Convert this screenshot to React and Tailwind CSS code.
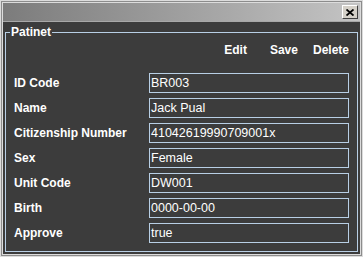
import React from "react";

const rows = [
  ["ID Code", "BR003"],
  ["Name", "Jack Pual"],
  ["Citizenship Number", "41042619990709001x"],
  ["Sex", "Female"],
  ["Unit Code", "DW001"],
  ["Birth", "0000-00-00"],
  ["Approve", "true"],
];

const App = () => {
  return (
    <div
      className="w-[363px] h-[257px] border border-[#dcdcdc] bg-[#dcdcdc]"
      style={{ fontFamily: '"Liberation Sans", Arial, sans-serif' }}
    >
      <div className="h-full border border-[#8c8c8c]">
        <div className="h-full flex flex-col border border-[#dcdcdc]">
          {/* title bar */}
          <div className="h-[18px] flex items-center justify-end pr-[2px] bg-gradient-to-r from-[#7c7c7c] to-[#c4c4c4]">
            <div className="w-[16px] h-[14px] flex items-center justify-center bg-[#d4d0c8] border-t border-l border-t-white border-l-white border-b border-r border-b-[#404040] border-r-[#404040]">
              <svg width="8" height="7" viewBox="0 0 8 7">
                <path d="M0.5 0.5 L7.5 6.5 M7.5 0.5 L0.5 6.5" stroke="#000" strokeWidth="1.8" />
              </svg>
            </div>
          </div>
          <div className="h-px bg-[#a8a8a8]" />

          {/* body */}
          <div className="flex-1 bg-[#3c3c3c] px-[2px] pt-[3px] pb-[2px] flex">
            <fieldset className="flex-1 border border-[#b8cfe5] px-[8px] text-white">
              <legend className="ml-[-4px] px-[1px] text-[12px] leading-[14px] font-bold text-white">
                Patinet
              </legend>

              <div className="flex justify-end items-center h-[16px] mt-[3px] text-[12px] font-bold">
                <span className="mr-[23px]">Edit</span>
                <span className="mr-[15px]">Save</span>
                <span>Delete</span>
              </div>

              <div className="mt-[15px] flex flex-col gap-[5px]">
                {rows.map(([label, value]) => (
                  <div key={label} className="flex items-center justify-between">
                    <span className="text-[12px] font-bold">{label}</span>
                    <div className="w-[200px] h-[20px] border border-[#b8cfe5] px-[1px] flex items-center text-[12.5px]">
                      {value}
                    </div>
                  </div>
                ))}
              </div>
            </fieldset>
          </div>
        </div>
      </div>
    </div>
  );
};

export default App;
